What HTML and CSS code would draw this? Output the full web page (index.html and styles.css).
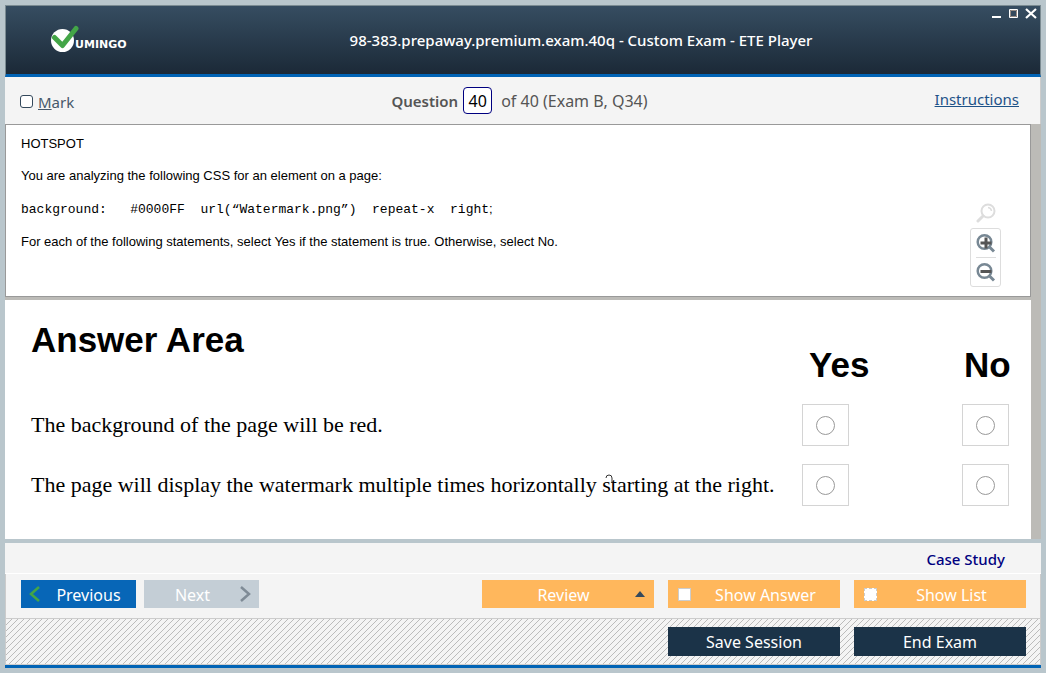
FILE: index.html
```html
<!DOCTYPE html>
<html lang="en">
<head>
<meta charset="utf-8">
<title>98-383.prepaway.premium.exam.40q - Custom Exam - ETE Player</title>
<link rel="stylesheet" href="styles.css">
</head>
<body>
<div class="window">
  <header class="titlebar">
    <div class="logo">
      <svg class="logo-mark" width="28" height="28" viewBox="0 0 28 28" aria-hidden="true">
        <circle cx="11.500" cy="15.500" r="11.500" fill="#fff"/>
        <path d="M3.500 12.500 11.500 20.500 25 3.500" fill="none" stroke="#43a547" stroke-width="5" stroke-linecap="round" stroke-linejoin="round"/>
      </svg>
      <span class="logo-text">UMINGO</span>
    </div>
    <h1 class="title">98-383.prepaway.premium.exam.40q - Custom Exam - ETE Player</h1>
    <div class="controls">
      <button class="control" aria-label="Minimize"><svg width="12" height="12" viewBox="0 0 12 12"><path d="M1 10h9" stroke="#fff" stroke-width="2"/></svg></button>
      <button class="control" aria-label="Maximize"><svg width="12" height="12" viewBox="0 0 12 12"><path d="M1.500 2.500h8v8h-8z" fill="#34495c" stroke="#fff"/><path d="M2.500 3.500h6v6h-6z" fill="none" stroke="#988c84"/></svg></button>
      <button class="control" aria-label="Close"><svg width="12" height="12" viewBox="0 0 12 12"><path d="M1 2 11 11M11 2 1 11" stroke="#fff" stroke-width="2.200"/></svg></button>
    </div>
  </header>

  <div class="toolbar">
    <label class="mark"><input class="mark-box" type="checkbox"><span><u>M</u>ark</span></label>
    <div class="counter">
      <label class="counter-label" for="number">Question</label>
      <input class="counter-input" id="number" type="text" value="40">
      <span class="counter-total">of 40 (Exam B, Q34)</span>
    </div>
    <a class="instructions" href="#">Instructions</a>
  </div>

  <main class="content">
    <section class="question">
      <div class="question-text">
        <p>HOTSPOT</p>
        <p>You are analyzing the following CSS for an element on a page:</p>
        <p class="code">background:   #0000FF  url(“Watermark.png”)  repeat-x  right<span class="plain">;</span></p>
        <p>For each of the following statements, select Yes if the statement is true. Otherwise, select No.</p>
      </div>
      <div class="zoom">
        <button class="zoom-reset" aria-label="Reset zoom"><svg width="20" height="20" viewBox="0 0 20 20"><circle cx="12" cy="8" r="6.500" fill="none" stroke="#ddd" stroke-width="2"/><path d="M7 13 2 18" stroke="#ddd" stroke-width="3" stroke-linecap="round"/><path d="M12 4.500a4 4 0 0 1 3.500 3.500" fill="none" stroke="#ddd" stroke-width="1.500"/></svg></button>
        <div class="zoom-group">
          <button class="zoom-button" aria-label="Zoom in"><svg width="20" height="20" viewBox="0 0 20 20"><circle cx="8.500" cy="9" r="6.800" fill="none" stroke="#788894" stroke-width="2.500"/><path d="M13 13.500 18 18.500" stroke="#788894" stroke-width="3"/><path d="M4.500 10h11M10 4.500v11" stroke="#555" stroke-width="3"/></svg></button>
          <button class="zoom-button" aria-label="Zoom out"><svg width="20" height="20" viewBox="0 0 20 20"><circle cx="8.500" cy="9" r="6.800" fill="none" stroke="#788894" stroke-width="2.500"/><path d="M13 13.500 18 18.500" stroke="#788894" stroke-width="3"/><path d="M4.500 9.500h11" stroke="#555" stroke-width="3"/></svg></button>
        </div>
      </div>
    </section>

    <section class="answers">
      <table class="answer-table">
        <thead>
          <tr><th class="area">Answer Area</th><th class="choice yes">Yes</th><th class="choice no">No</th></tr>
        </thead>
        <tbody>
          <tr>
            <td class="statement" id="s1">The background of the page will be red.</td>
            <td><label class="option"><input class="radio" type="radio" name="a1" aria-label="Yes" aria-describedby="s1"></label></td>
            <td><label class="option"><input class="radio" type="radio" name="a1" aria-label="No" aria-describedby="s1"></label></td>
          </tr>
          <tr>
            <td class="statement" id="s2">The page will display the watermark multiple times horizontally <span class="caret-anchor">s<svg class="caret" width="8" height="10" viewBox="0 0 8 10" aria-hidden="true"><path d="M1 4a3 3 0 0 1 6 0v5" fill="none" stroke="#333"/></svg></span>tarting at the right.</td>
            <td><label class="option"><input class="radio" type="radio" name="a2" aria-label="Yes" aria-describedby="s2"></label></td>
            <td><label class="option"><input class="radio" type="radio" name="a2" aria-label="No" aria-describedby="s2"></label></td>
          </tr>
        </tbody>
      </table>
    </section>
  </main>

  <div class="case-row"><a class="case-link" href="#">Case Study</a></div>

  <nav class="actions">
    <button class="button nav-button previous"><svg width="12" height="18" viewBox="0 0 12 18"><path d="M10 2 2 9l8 7" fill="none" stroke="#43a547" stroke-width="2.500"/></svg><span class="text">Previous</span></button>
    <button class="button nav-button next"><span class="text">Next</span><svg width="12" height="18" viewBox="0 0 12 18"><path d="M2 2l8 7-8 7" fill="none" stroke="#7f8b96" stroke-width="2.500"/></svg></button>
    <span class="spacer"></span>
    <button class="button orange review"><span class="text">Review</span><svg width="10" height="6" viewBox="0 0 10 6"><path d="M0 6 5 0l5 6z" fill="#34495c"/></svg></button>
    <label class="button orange"><input class="box" type="checkbox"><span class="text shifted">Show Answer</span></label>
    <label class="button orange"><input class="box dashed" type="checkbox"><span class="text shifted">Show List</span></label>
  </nav>

  <footer class="footer">
    <button class="button dark">Save Session</button>
    <button class="button dark">End Exam</button>
  </footer>
</div>
</body>
</html>
```
FILE: styles.css
```css
* { box-sizing: border-box; }
body {
  margin: 0;
  min-height: 100vh;
  padding: 5px;
  display: flex;
  background: #b9c6cc;
  font-family: "Noto Sans", "Open Sans", sans-serif;
  font-size: 15px;
}
button { font: inherit; border: 0; padding: 0; background: none; }
svg { display: block; }
.window { flex: 1; min-width: 0; display: flex; flex-direction: column; border-bottom: 3px solid #0063b5; }

.titlebar {
  display: grid;
  grid-template-columns: 1fr auto 1fr;
  height: 72px;
  border: 1px solid #7b8b92;
  border-bottom: 3px solid #0063b5;
  background: linear-gradient(#364d61, #1b2937);
  color: #fff;
}
.logo { display: flex; align-items: flex-start; padding: 19px 0 0 45px; }
.logo-text { margin: 13px 0 0 -4px; font: bold 11px/14px "DejaVu Sans", sans-serif; }
.title { margin: 0; padding-left: 116px; align-self: center; font-size: 15px; font-weight: 500; line-height: 20px; }
.controls { display: flex; justify-content: flex-end; gap: 5px; padding: 1px 3px 0 0; }
.control { width: 12px; height: 12px; }

.toolbar {
  display: grid;
  grid-template-columns: 1fr auto 1fr;
  align-items: center;
  height: 47px;
  padding: 0 21px 0 15px;
  background: #f4f4f4;
  border-right: 1px solid #ccc;
  color: #555;
}
.mark { display: flex; align-items: center; gap: 5px; padding-top: 2px; color: #46586a; }
.mark-box { appearance: none; width: 13px; height: 13px; margin: 0; border: 1px solid #34495c; border-radius: 3px; background: #fff; }
.counter { display: flex; align-items: center; }
.counter-label { font-weight: 600; }
.counter-input {
  width: 29px; height: 27px; margin: 0 9px 0 5px; padding: 0;
  border: 1px solid #000080; border-radius: 4px; background: #fff;
  font: inherit; font-size: 16px; color: #000; text-align: center;
}
.counter-total { font-size: 16px; }
.instructions { justify-self: end; padding-bottom: 3px; color: #1d5288; }

.content { flex: 1; display: flex; flex-direction: column; background: #bcbbb7; padding-right: 10px; }
.question {
  display: flex;
  justify-content: space-between;
  height: 173px;
  margin-bottom: 3px;
  padding: 11px 29px 9px 15px;
  border: 1px solid #999;
  background: #fff;
}
.question-text { font: 13px/16px "Liberation Sans", Arial, sans-serif; color: #000; }
.question-text p { margin: 0 0 16px; }
.question-text .code { font-family: "Liberation Mono", "Courier New", monospace; line-height: 17px; white-space: pre-wrap; }
.plain { font-family: "Liberation Sans", Arial, sans-serif; }
.zoom { align-self: flex-end; display: flex; flex-direction: column; align-items: center; gap: 5px; }
.zoom-group { width: 31px; padding: 0 5px; border: 1px solid #ddd; border-radius: 3px; }
.zoom-button { display: block; width: 20px; height: 28px; }
.zoom-button + .zoom-button { border-top: 1px solid #ddd; height: 29px; }

.answers { flex: 1; padding-left: 26px; background: #fff; }
.answer-table { width: 100%; table-layout: fixed; border-collapse: collapse; color: #000; }
.answer-table th, .answer-table td { padding: 0; text-align: left; vertical-align: top; }
.answer-table th { height: 104px; font: bold 35px/40px "Liberation Sans", Arial, sans-serif; }
.answer-table .area { padding-top: 20px; }
.answer-table .choice { width: 160px; padding: 45px 0 0 7px; }
.answer-table .no { width: 69px; padding-left: 2px; }
.answer-table td { height: 60px; }
.answer-table .statement { font: 22px/42px "Liberation Serif", "Times New Roman", serif; white-space: nowrap; }
.option { display: grid; place-items: center; width: 47px; height: 42px; border: 1px solid #d4d4d4; }
.radio { appearance: none; width: 19px; height: 19px; margin: 0; border: 1px solid #999; border-radius: 50%; background: #fff; }
.caret-anchor { position: relative; }
.caret { position: absolute; left: 3px; top: 2px; }

.case-row {
  display: flex; justify-content: flex-end; align-items: center;
  height: 35px; padding-right: 36px;
  border-top: 4px solid #b9c6cc; border-bottom: 1px solid #fff;
  background: #f4f4f4;
}
.case-link { padding-top: 2px; color: #000080; text-decoration: none; font-weight: 500; }

.actions, .footer { display: flex; gap: 14px; border: 1px solid #ccc; border-top: 0; }
.actions { height: 45px; padding: 6px 14px 10px 15px; background: #f4f4f4; }
.spacer { flex: 1; }
.button { display: flex; align-items: center; justify-content: center; width: 172px; height: 28px; font: 16px/20px "Noto Sans", sans-serif; color: #fff; }
.text { flex: 1; padding-top: 2px; text-align: center; }
.nav-button { width: 115px; padding: 0 8px; }
.previous { background: #0766b7; }
.previous .text { padding-left: 8px; }
.next { margin-left: -6px; background: #c4ced6; }
.next .text { padding-right: 6px; }
.orange { background: #ffb75c; padding: 0 10px; }
.review { padding-right: 9px; }
.shifted { padding-left: 10px; }
.box { appearance: none; width: 13px; height: 13px; margin: 0; border: 1px solid #ccc; background: #fff; }
.dashed { border-style: dashed; }
.footer {
  justify-content: flex-end;
  height: 46px;
  padding: 8px 14px;
  background: #f4f4f4 linear-gradient(135deg, transparent 46%, #bbb 46% 54%, transparent 54%) 0 0 / 6px 6px;
}
.dark { height: 29px; background: #1b3348; }
```
